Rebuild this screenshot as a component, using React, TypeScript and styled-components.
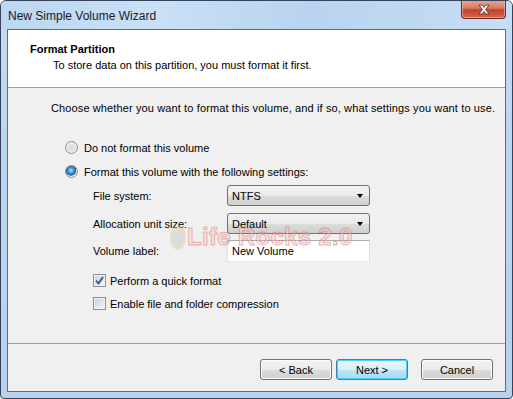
import styled, { createGlobalStyle } from 'styled-components'

const GlobalStyle = createGlobalStyle`
  html, body {
    margin: 0;
    padding: 0;
    background: #ffffff;
  }
  body {
    font-family: "Liberation Sans", Arial, sans-serif;
    font-size: 11px;
    color: #000;
  }
`

const App = () => {
  return (
    <>
      <GlobalStyle />
      <Window>
        <TitleBar>
          <TitleText>New Simple Volume Wizard</TitleText>
          <CloseButton>
            <svg width="14" height="11" viewBox="0 0 14 11">
              <path
                d="M2 1 L5 1 L7 3.5 L9 1 L12 1 L8.6 5.5 L12 10 L9 10 L7 7.5 L5 10 L2 10 L5.4 5.5 Z"
                fill="#ffffff"
                stroke="#5a2318"
                strokeWidth="0.8"
                strokeLinejoin="round"
              />
            </svg>
          </CloseButton>
        </TitleBar>

        <Client>
          <Header>
            <HeaderTitle>Format Partition</HeaderTitle>
            <HeaderSub>To store data on this partition, you must format it first.</HeaderSub>
          </Header>

          <Body>
            <Intro>
              Choose whether you want to format this volume, and if so, what settings you want to use.
            </Intro>

            <OptionRow $top={26}>
              <Radio />
              <span>Do not format this volume</span>
            </OptionRow>
            <OptionRow $top={11}>
              <Radio $checked />
              <span>Format this volume with the following settings:</span>
            </OptionRow>

            <Form>
              <FieldLabel>File system:</FieldLabel>
              <Select>
                <span>NTFS</span>
                <Arrow />
              </Select>

              <FieldLabel>Allocation unit size:</FieldLabel>
              <Select>
                <span>Default</span>
                <Arrow />
              </Select>

              <FieldLabel>Volume label:</FieldLabel>
              <TextBox>New Volume</TextBox>
            </Form>

            <CheckRow $top={12}>
              <CheckBox>
                <svg width="9" height="9" viewBox="0 0 9 9">
                  <path d="M1 4.5 L3.5 7.5 L8 1" fill="none" stroke="#3a5290" strokeWidth="1.8" />
                </svg>
              </CheckBox>
              <span>Perform a quick format</span>
            </CheckRow>
            <CheckRow $top={10}>
              <CheckBox />
              <span>Enable file and folder compression</span>
            </CheckRow>

            <Watermark>
              <WatermarkLogo />
              <WatermarkText>Life Rocks 2.0</WatermarkText>
            </Watermark>
          </Body>

          <Footer>
            <Button>&lt; Back</Button>
            <Button $default>Next &gt;</Button>
            <Button $gap>Cancel</Button>
          </Footer>
        </Client>
      </Window>
    </>
  )
}

export default App

const Window = styled.div`
  width: 513px;
  height: 399px;
  box-sizing: border-box;
  display: flex;
  flex-direction: column;
  border: 1px solid #34425a;
  border-radius: 6px 6px 4px 4px;
  background: linear-gradient(180deg, #c4dcf4 0%, #bcd5ef 40%, #b8d2ee 100%);
  overflow: hidden;
`

const TitleBar = styled.div`
  height: 28px;
  display: flex;
  align-items: flex-start;
  justify-content: space-between;
  background: linear-gradient(90deg, #bcd7f2 0%, #c9e0f6 30%, #b9d4f0 60%, #c6ddf5 100%);
`

const TitleText = styled.div`
  padding: 8px 0 0 7px;
  font-family: "Liberation Sans", Arial, sans-serif;
  font-size: 12px;
  color: #1a1a1a;
`

const CloseButton = styled.div`
  width: 45px;
  height: 19px;
  margin: -1px 6px 0 0;
  box-sizing: border-box;
  display: flex;
  align-items: center;
  justify-content: center;
  border: 1px solid #6b2a1e;
  border-top: none;
  border-radius: 0 0 4px 4px;
  background: linear-gradient(180deg, #e8a898 0%, #d77a64 45%, #c2432a 55%, #d0674e 100%);
  box-shadow: inset 0 0 0 1px rgba(255, 210, 200, 0.5);
`

const Client = styled.div`
  flex: 1;
  margin: 0 6px 6px 6px;
  display: flex;
  flex-direction: column;
  border: 1px solid #5d6d80;
  background: #f0f0f0;
`

const Header = styled.div`
  height: 58px;
  box-sizing: border-box;
  padding: 12px 0 0 22px;
  background: #ffffff;
  border-bottom: 1px solid #a0a0a0;
`

const HeaderTitle = styled.div`
  font-weight: bold;
  line-height: 14px;
`

const HeaderSub = styled.div`
  margin: 2px 0 0 23px;
  line-height: 14px;
`

const Body = styled.div`
  position: relative;
  flex: 1;
  padding: 13px 0 0 43px;
`

const Intro = styled.div`
  line-height: 14px;
  letter-spacing: 0.12px;
`

const OptionRow = styled.div<{ $top: number }>`
  display: flex;
  align-items: center;
  gap: 6px;
  margin: ${(p) => p.$top}px 0 0 14px;
  height: 13px;
`

const Radio = styled.span<{ $checked?: boolean }>`
  width: 13px;
  height: 13px;
  box-sizing: border-box;
  border-radius: 50%;
  border: 1px solid #8f9090;
  background: ${(p) =>
    p.$checked
      ? 'radial-gradient(circle at 45% 40%, #b9dbf6 0%, #3d8fd0 35%, #1c5a9a 55%, #e4e4e4 62%, #f6f6f6 100%)'
      : 'radial-gradient(circle at 50% 50%, #d8d8d8 0%, #e6e6e6 50%, #fafafa 100%)'};
`

const Form = styled.div`
  display: grid;
  grid-template-columns: 134px 143px;
  grid-auto-rows: 21px;
  row-gap: 7px;
  align-items: center;
  margin: 7px 0 0 42px;
  & > :nth-child(5),
  & > :nth-child(6) {
    margin-top: -1px;
  }
`

const FieldLabel = styled.div`
  line-height: 14px;
`

const Select = styled.div`
  height: 21px;
  box-sizing: border-box;
  display: flex;
  align-items: center;
  justify-content: space-between;
  padding: 0 6px 0 4px;
  border: 1px solid #707070;
  border-radius: 3px;
  background: linear-gradient(180deg, #f2f2f2 0%, #ebebeb 50%, #dddddd 51%, #cfcfcf 100%);
`

const Arrow = styled.span`
  width: 0;
  height: 0;
  border-left: 3.5px solid transparent;
  border-right: 3.5px solid transparent;
  border-top: 4px solid #000;
`

const TextBox = styled.div`
  height: 22px;
  box-sizing: border-box;
  display: flex;
  align-items: center;
  padding: 0 4px;
  border: 1px solid #abadb3;
  border-top-color: #abadb3;
  border-left-color: #e2e3ea;
  border-right-color: #dbdfe6;
  border-bottom-color: #e3e9ef;
  background: #ffffff;
`

const CheckRow = styled.div<{ $top: number }>`
  display: flex;
  align-items: center;
  gap: 4px;
  margin: ${(p) => p.$top}px 0 0 42px;
  height: 13px;
`

const CheckBox = styled.span`
  width: 13px;
  height: 13px;
  box-sizing: border-box;
  display: flex;
  align-items: center;
  justify-content: center;
  border: 1px solid #8e8f8f;
  background: linear-gradient(135deg, #cbcfd5 0%, #f6f6f6 100%);
  box-shadow: inset 0 0 0 1px #f4f4f4;
`

const Watermark = styled.div`
  position: absolute;
  left: 162px;
  top: 135px;
  display: flex;
  align-items: center;
  gap: 1px;
  pointer-events: none;
`

const WatermarkLogo = styled.span`
  width: 16px;
  height: 26px;
  border-radius: 50%;
  background: radial-gradient(circle at 50% 55%, rgba(190, 200, 215, 0.55) 0%, rgba(230, 200, 140, 0.45) 70%, transparent 72%);
`

const WatermarkText = styled.span`
  font-family: "Liberation Sans", Arial, sans-serif;
  font-size: 24px;
  font-weight: bold;
  letter-spacing: 0.3px;
  color: rgba(245, 200, 200, 0.35);
  -webkit-text-stroke: 1px rgba(225, 90, 90, 0.45);
`

const Footer = styled.div`
  height: 48px;
  box-sizing: border-box;
  display: flex;
  justify-content: flex-end;
  align-items: flex-start;
  gap: 4px;
  padding: 15px 12px 0 0;
  border-top: 1px solid #a0a0a0;
`

const Button = styled.div<{ $default?: boolean; $gap?: boolean }>`
  width: 72px;
  height: 21px;
  box-sizing: border-box;
  display: flex;
  align-items: center;
  justify-content: center;
  margin-left: ${(p) => (p.$gap ? '9px' : '0')};
  border: 1px solid ${(p) => (p.$default ? '#3c7fb1' : '#707070')};
  border-radius: 3px;
  background: ${(p) =>
    p.$default
      ? 'linear-gradient(180deg, #eaf6fd 0%, #d9f0fc 50%, #bee6fd 51%, #a7d9f5 100%)'
      : 'linear-gradient(180deg, #f2f2f2 0%, #ebebeb 50%, #dddddd 51%, #cfcfcf 100%)'};
  box-shadow: inset 0 0 0 1px ${(p) => (p.$default ? '#48d2fb' : '#fcfcfc')};
`
